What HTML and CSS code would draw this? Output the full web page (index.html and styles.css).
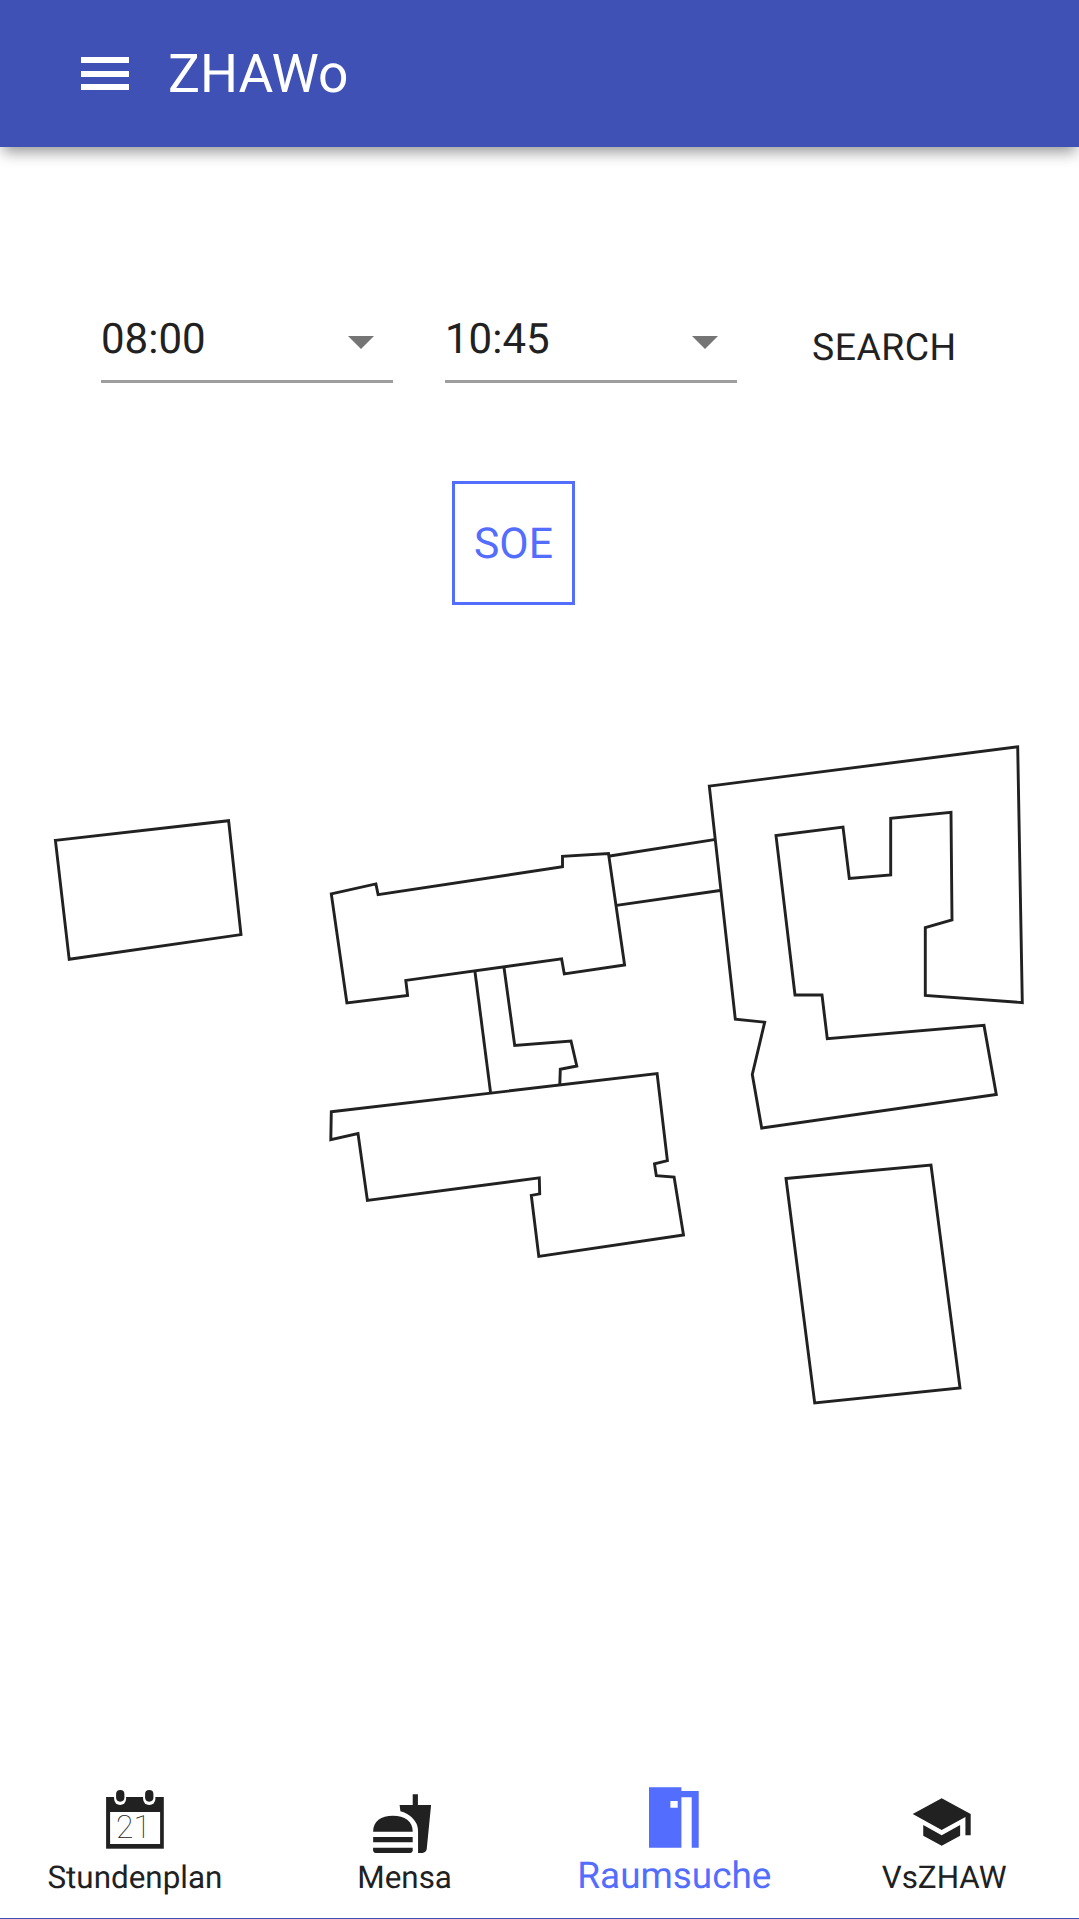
FILE: index.html
```html
<!DOCTYPE html>
<html lang="de">
<head>
<meta charset="utf-8">
<title>ZHAWo</title>
<link rel="stylesheet" href="styles.css">
</head>
<body>
<header class="toolbar">
  <svg class="menu-icon" viewBox="0 0 48 34" aria-hidden="true"><path d="M0 0h48v6H0zM0 14h48v6H0zM0 27h48v6H0z"/></svg>
  <h1 class="title">ZHAWo</h1>
</header>
<main class="content">
  <form class="filters">
    <div class="select"><span class="select-value">08:00</span><svg class="arrow" viewBox="0 0 26 13" aria-hidden="true"><path d="M0 0h26L13 13z"/></svg></div>
    <div class="select"><span class="select-value">10:45</span><svg class="arrow" viewBox="0 0 26 13" aria-hidden="true"><path d="M0 0h26L13 13z"/></svg></div>
    <div class="search">SEARCH</div>
  </form>
  <div class="building-tag">SOE</div>
  <svg class="map" viewBox="0 700 1079 720" aria-label="Gebäudeplan">
    <polygon points="55.4,840.4 228.6,820.7 241,934.6 69.2,959.3"/>
    <polygon points="331.3,893.9 375.9,883.9 378.1,894.6 562.5,866.8 562.5,856.4 608.5,853.6 624.6,965 564.3,973.9 561.6,958.9 405.8,980.4 407.6,995.4 346.9,1002.9"/>
    <polyline points="609.8,856 714.3,839.6"/>
    <polyline points="616.5,905.4 720,890.5"/>
    <polyline points="475,971.8 490.6,1092.9"/>
    <polyline points="504,967.5 514.7,1045.4 571,1041 576.8,1066 560.3,1069.3 559.8,1084.6"/>
    <polygon points="331.3,1111.8 657.1,1073.6 667.4,1160.7 654.5,1163.9 656.3,1175.7 674.1,1177.1 683.5,1235 538.8,1256.4 531.3,1195.4 539.7,1193.9 539.3,1177.9 367.4,1200.4 358,1133.6 330.8,1139.6"/>
    <polygon points="709.3,786.1 1017.7,746.8 1022.3,1002.6 925.3,995.4 925.3,927.6 952,920 951,812.4 890.7,818.2 890.7,874.9 849.3,878.5 843,827.1 776,835.6 795,995 822,995 827.3,1038.8 984,1025.4 996.3,1094.5 761.7,1128 752.3,1074.5 764.7,1022.2 735.3,1019.1"/>
    <polygon points="786,1178.5 931,1165.1 960,1387.9 814.7,1403"/>
  </svg>
</main>
<nav class="bottom-nav">
  <div class="nav-item">
    <svg class="nav-icon" viewBox="0 0 64 68" aria-hidden="true">
      <rect class="ink" x="3.1" y="11" width="57.7" height="51.7"/>
      <rect class="paper" x="7.1" y="26" width="50" height="32"/>
      <rect class="paper" x="11.1" y="2" width="12" height="17" rx="6"/>
      <rect class="paper" x="40.1" y="2" width="12.3" height="17" rx="6"/>
      <rect class="ink" x="13.1" y="4" width="8.3" height="11.7" rx="4.1"/>
      <rect class="ink" x="42.1" y="4" width="8.3" height="11.7" rx="4.1"/>
      <text class="cal-day" x="30.6" y="52">21</text>
    </svg>
    <span class="nav-label">Stundenplan</span>
  </div>
  <div class="nav-item">
    <svg class="nav-icon" viewBox="0 0 64 68" aria-hidden="true">
      <g class="ink" transform="translate(-2.54 5.63) scale(2.636 2.667)">
        <path d="M18.06 22.99h1.66c.84 0 1.53-.64 1.63-1.46L23 5.05h-5V1h-1.97v4.05h-4.97l.3 2.34c1.71.47 3.31 1.32 4.27 2.26 1.44 1.42 2.43 2.89 2.43 5.29v8.05z"/>
        <path d="M1 21.99V21h15.03v.99c0 .55-.45 1-1.01 1H2.01c-.56 0-1.01-.45-1.01-1z"/>
        <path d="M1 15C1 11 4 9 8.5 9s7.53 2 7.53 6z"/>
        <path d="M1.02 17h15v2h-15z"/>
      </g>
    </svg>
    <span class="nav-label">Mensa</span>
  </div>
  <div class="nav-item nav-item-active">
    <svg class="nav-icon" viewBox="0 0 64 68" aria-hidden="true">
      <path class="accent" fill-rule="evenodd" d="M7 1.3h32.4V5h17.3v56.7h-7V11.3H39.4v50.4H7zM28.4 15v6.7h7.3V15z"/>
    </svg>
    <span class="nav-label">Raumsuche</span>
  </div>
  <div class="nav-item">
    <svg class="nav-icon" viewBox="0 0 64 68" aria-hidden="true">
      <path class="ink" transform="translate(-1.94 4.4) scale(2.636 2.633)" d="M5 13.18v4L12 21l7-3.82v-4L12 17l-7-3.82zM12 3L1 9l11 6 9-4.91V17h2V9L12 3z"/>
    </svg>
    <span class="nav-label">VsZHAW</span>
  </div>
</nav>
</body>
</html>
```

FILE: styles.css
```css
* { box-sizing: border-box; }

html, body { margin: 0; padding: 0; }

body {
  width: 1079px;
  height: 1919px;
  overflow: hidden;
  display: flex;
  flex-direction: column;
  background: #fff;
  color: #212121;
  font-family: Roboto, "Liberation Sans", sans-serif;
  text-rendering: geometricPrecision;
}

.toolbar {
  flex: none;
  height: 147px;
  display: flex;
  align-items: center;
  padding-left: 81px;
  background: #3f51b5;
  box-shadow: 0 8px 14px -3px rgba(0, 0, 0, 0.42);
  position: relative;
  color: #fff;
}

.menu-icon { width: 48px; height: 34px; fill: #fff; margin-right: 39px; }

.title { margin: 2px 0 0; font-size: 53.33px; font-weight: 400; line-height: 60px; }

.content { flex: 1; display: flex; flex-direction: column; }

.filters { display: flex; align-items: flex-start; margin: 162px 0 0 101px; }

.select {
  width: 292px;
  height: 74px;
  display: flex;
  justify-content: space-between;
  align-items: flex-start;
  padding-right: 19px;
  border-bottom: 3px solid #9e9e9e;
}

.select + .select { margin-left: 52px; }

.select-value { font-size: 42px; line-height: 62px; }

.arrow { width: 26px; height: 13px; margin-top: 27px; fill: #757575; }

.search { margin: 14px 0 0 75px; font-size: 37.33px; line-height: 50px; letter-spacing: 0.5px; }

.building-tag {
  width: 123px;
  height: 124px;
  margin: 98px 0 0 452px;
  padding-top: 2px;
  display: flex;
  align-items: center;
  justify-content: center;
  border: 3px solid #536dfe;
  color: #536dfe;
  font-size: 42.67px;
}

.map {
  display: block;
  width: 1079px;
  height: 720px;
  margin-top: 95px;
  fill: none;
  stroke: #212121;
  stroke-width: 2.9;
}

.bottom-nav {
  flex: none;
  height: 133px;
  display: flex;
  border-bottom: 1px solid #3f51b5;
}

.nav-item { flex: 1; display: flex; flex-direction: column; align-items: center; }

.nav-icon { display: block; width: 64px; height: 68px; }

.nav-label { font-size: 31.4px; line-height: 48px; }

.nav-item-active .nav-label { font-size: 36.9px; line-height: 45px; color: #536dfe; }

.ink { fill: #212121; }
.paper { fill: #fff; }
.accent { fill: #536dfe; }

.cal-day {
  font-family: Roboto, sans-serif;
  font-size: 32px;
  font-weight: 100;
  text-anchor: middle;
  fill: #212121;
}
```
